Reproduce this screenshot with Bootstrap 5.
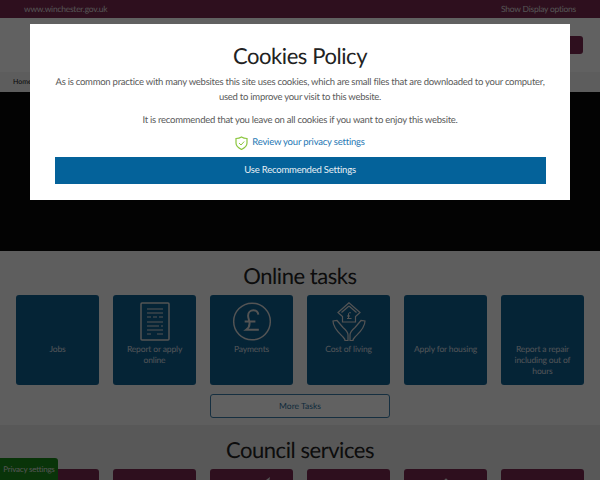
<!DOCTYPE html>
<html lang="en">
<head>
  <meta charset="UTF-8">
  <meta name="viewport" content="width=device-width, initial-scale=1.0">
  <title>Winchester City Council</title>
  <link href="https://cdn.jsdelivr.net/npm/bootstrap@5.3.0/dist/css/bootstrap.min.css" rel="stylesheet">
  <style>
    html, body { height: 480px; overflow: hidden; }
    body { font-family: "Lato", "Open Sans", sans-serif; background: #fff; text-rendering: geometricPrecision; }
    .top-strip { height: 18px; background: #7a2850; color: #ddd; font-size: 8.5px; letter-spacing: -.25px; padding: 0 24px; }
    .site-head { height: 54px; background: #fff; padding: 18px 17px 0 0; }
    .search-btn { width: 60px; height: 18px; background: #7a2850; border-radius: 3px; }
    .crumb-bar { height: 20px; background: #f4f4f4; font-size: 7px; color: #111; padding: 0 13px; }
    .hero-band { height: 159px; background: #0a0a0a; }
    .tasks-band { height: 174px; background: #f7f7f7; padding: 0 16px; }
    .services-band { height: 55px; background: #e6e6e6; padding: 0 16px; overflow: hidden; }
    .band-title { font-size: 22px; line-height: 26px; letter-spacing: -.45px; color: #222; text-align: center; margin: 0; font-weight: 400; }
    .tasks-band .band-title { padding: 12px 0 6px; }
    .services-band .band-title { padding: 12px 0 6px; }
    .tile-grid { display: grid; grid-template-columns: repeat(6, 83px); gap: 14px; }
    .tile { height: 90px; background: #0f5f8f; border-radius: 3px; color: #d4dce2; font-size: 8.5px; letter-spacing: -.15px; line-height: 10.8px; text-align: center; padding: 49px 5px 0; position: relative; }
    .tile svg { position: absolute; left: 50%; top: 7px; transform: translateX(-50%); }
    .tile-red { background: #7a2850; }
    .more-btn { display: block; width: 180px; height: 24px; margin: 9px auto 0; border: 1px solid #3a7ca8; border-radius: 3px; background: #fff; color: #2a6f9c; font-size: 8.5px; line-height: 22px; text-align: center; }
    .dim-layer { position: fixed; inset: 0; background: rgba(0,0,0,.62); z-index: 10; }
    .cookie-box { position: fixed; left: 30px; top: 24px; width: 540px; height: 176px; background: #fff; z-index: 20; padding: 19px 24.5px 0; text-align: center; color: #5a5a5a; font-size: 9.5px; letter-spacing: -.2px; line-height: 15px; }
    .cookie-title { font-size: 22px; line-height: 26px; letter-spacing: -.42px; color: #222; margin: 0 0 6px; font-weight: 400; }
    .cookie-box p { margin: 0 0 7px; white-space: nowrap; letter-spacing: -.25px; }
    .cookie-box .intro-copy { margin-bottom: 8px; }
    .review-line { height: 15px; margin-bottom: 7px; color: #1f78b4; }
    .use-btn { display: block; width: 100%; height: 27px; border: 0; border-radius: 0; background: #04629a; color: #e8f0f5; font-size: 9.5px; letter-spacing: -.2px; padding: 0; }
    .privacy-tab { position: fixed; left: 0; bottom: 0; width: 58px; height: 22px; background: #1a8a1a; color: #ddd; font-size: 8px; letter-spacing: -.22px; line-height: 22px; text-align: center; border-top-right-radius: 3px; z-index: 5; }
  </style>
</head>
<body>

<div class="top-strip d-flex justify-content-between align-items-center">
  <span>www.winchester.gov.uk</span>
  <span>Show Display options</span>
</div>
<div class="site-head d-flex justify-content-end"><div class="search-btn"></div></div>
<div class="crumb-bar d-flex align-items-center">Home</div>
<div class="hero-band"></div>

<section class="tasks-band">
  <h2 class="band-title">Online tasks</h2>
  <div class="tile-grid">
    <div class="tile">Jobs</div>
    <div class="tile">
      <svg width="30" height="39" viewBox="0 0 30 39" fill="none" stroke="#ddd"><rect x="1" y="1" width="28" height="37" rx="1" stroke-width="1.5"/><path d="M7 7h16M7 11h16M7 15h4m2 0h4m2 0h4M7 20h16M7 24h12m2 0h2M7 28h16M7 32h4m6 0h6" stroke-width="1.2"/></svg>
      Report or apply online
    </div>
    <div class="tile">
      <svg width="39" height="39" viewBox="0 0 40 40" fill="none" stroke="#ddd"><circle cx="20" cy="20" r="18.8" stroke-width="1.5"/><path d="M26.5 13c-.5-3-2.5-4.5-5-4.5-3 0-5.5 2-5.5 5.5 0 3 1.5 5 1.5 8 0 3-1.5 5-3.5 6.5h13M12.5 20h11" stroke-width="2"/></svg>
      Payments
    </div>
    <div class="tile">
      <svg width="34" height="39" viewBox="0 0 34 39" fill="none" stroke="#ddd" stroke-width="1.2"><path d="M17 .8 6 10.5l4.5 4V20h13v-5.5l4.5-4z"/><path d="M17 4 9.5 10.5"/><path d="M17 4l7.5 6.5"/><path d="M19 11c-1-.8-2.5-.3-2.5 1v4m-1.5-2h3m-3 2.5h4.5" stroke-width="1"/><path d="M1 19c0 7 6 12 10 16 1.5 1.5 2 2.5 2 3.5h3V33c0-3-2-5-5-7.5l-6-7z"/><path d="M33 19c0 7-6 12-10 16-1.5 1.5-2 2.5-2 3.5h-3V33c0-3 2-5 5-7.5l6-7z"/></svg>
      Cost of living
    </div>
    <div class="tile">Apply for housing</div>
    <div class="tile">Report a repair including out of hours</div>
  </div>
  <a class="more-btn text-decoration-none" href="#">More Tasks</a>
</section>

<section class="services-band">
  <h2 class="band-title">Council services</h2>
  <div class="tile-grid">
    <div class="tile tile-red"></div>
    <div class="tile tile-red"></div>
    <div class="tile tile-red"><svg width="40" height="40" viewBox="0 0 40 40" fill="#ddd"><path d="M34 4l4-3-1 5z"/></svg></div>
    <div class="tile tile-red"></div>
    <div class="tile tile-red"><svg width="40" height="40" viewBox="0 0 40 40" fill="#ddd"><circle cx="20" cy="4" r="1.5"/></svg></div>
    <div class="tile tile-red"></div>
  </div>
</section>

<div class="privacy-tab">Privacy settings</div>
<div class="dim-layer"></div>

<div class="cookie-box">
  <h1 class="cookie-title">Cookies Policy</h1>
  <p class="intro-copy">As is common practice with many websites this site uses cookies, which are small files that are downloaded to your computer,<br>used to improve your visit to this website.</p>
  <p>It is recommended that you leave on all cookies if you want to enjoy this website.</p>
  <div class="review-line d-flex justify-content-center align-items-center gap-1">
    <svg width="13" height="14" viewBox="0 0 13 14" fill="none" stroke="#8cc63f"><path d="M6.5 1C5 2 3 2.5 1 2.5V7c0 3 2.5 5 5.500 6.500 3-1.500 5.500-3.500 5.500-6.500V2.500C10 2.500 8 2 6.500 1z" stroke-width="1.2"/><path d="M4 7l2 2 3.200-3.500"/></svg>
    <span>Review your privacy settings</span>
  </div>
  <button class="btn use-btn">Use Recommended Settings</button>
</div>

</body>
</html>
